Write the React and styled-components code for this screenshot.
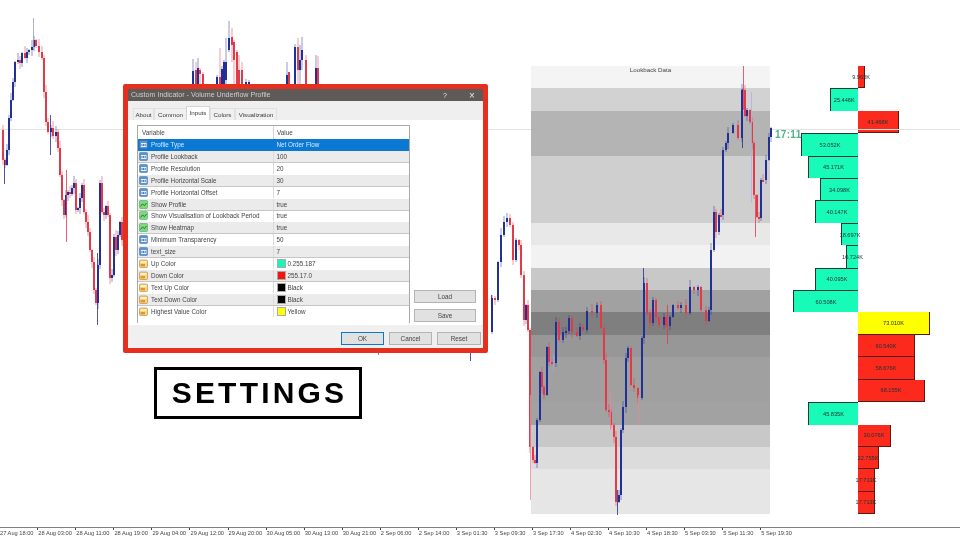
import React from 'react';
import styled, { createGlobalStyle } from 'styled-components';

const Global = createGlobalStyle`
  html, body { margin: 0; padding: 0; background: #fff; }
  body { font-family: "Liberation Sans", Arial, sans-serif; }
`;

const Page = styled.div`
  width: 960px; height: 540px; background: #fff; overflow: hidden;
  display: flex; flex-direction: column; filter: blur(0.3px);
`;
const ChartArea = styled.div`
  position: relative; height: 527px; flex: none; overflow: hidden;
`;
const GridLine = styled.div`
  position: absolute; left: 0; right: 0; top: 129px; height: 1px; background: #e2e2e2;
`;
const Heatmap = styled.div`
  position: absolute; left: 531px; top: 66px; width: 239px; height: 448px;
  display: flex; flex-direction: column;
`;
const Band = styled.div`
  flex: 1 1 0; background: ${p => p.$c};
`;
const HeatTitle = styled.div`
  position: absolute; left: 0; right: 0; top: 0; text-align: center;
  font-size: 6.2px; line-height: 7px; color: #444;
`;
const CandleSvg = styled.svg`
  position: absolute; left: 0; top: 0; width: 960px; height: 527px;
`;
const Countdown = styled.div`
  position: absolute; left: 775px; top: 128px; font-size: 10px; line-height: 13px;
  font-weight: 700; letter-spacing: .3px; color: #55b088;
`;
const Profile = styled.div`
  position: absolute; left: 780px; top: 66px; width: 170px; height: 448px;
  display: flex; flex-direction: column;
`;
const ProfileRow = styled.div`
  flex: 1 1 0; display: grid; grid-template-columns: 78px 1fr; min-height: 0;
`;
const Bar = styled.div`
  box-sizing: border-box; height: 100%; display: flex; align-items: center; justify-content: center;
  white-space: nowrap; font-size: 5.6px; color: #233; overflow: visible;
  background: ${p => p.$c};
  border: 0 solid #1b3a33;
  ${p => p.$left ? 'border-top-width: 1px; border-left-width: 1px;' : 'border-bottom-width: 1px; border-right-width: 1px; border-color: #5a1a14;'}
`;
const LeftSlot = styled.div`display: flex; justify-content: flex-end; min-width: 0;`;
const RightSlot = styled.div`display: flex; justify-content: flex-start; min-width: 0;`;

const Dialog = styled.div`
  position: absolute; left: 123px; top: 84px; width: 365px; height: 269px; box-sizing: border-box;
  border: 5px solid #e6301f; border-radius: 2px; background: #fff;
  display: flex; flex-direction: column; font-size: 6.3px; color: #3a3a3a;
`;
const TitleBar = styled.div`
  flex: none; height: 12px; background: #5e5a57; color: #cfcfcf; font-size: 7.1px;
  display: flex; align-items: center; padding-left: 3px; gap: 5px;
`;
const TitleText = styled.span`flex: 1;`;
const TitleBtn = styled.span`
  width: 22px; text-align: center; color: #e6e6e6; font-size: ${p => p.$s || 8}px;
`;
const TabStrip = styled.div`
  flex: none; height: 19px; background: #efefef; display: flex; align-items: flex-end;
  padding-left: 5px; box-sizing: border-box;
`;
const Tab = styled.div`
  box-sizing: border-box; height: ${p => p.$on ? 14 : 12}px; width: ${p => p.$w}px;
  display: flex; align-items: center; justify-content: center; font-size: 6.2px;
  padding-bottom: ${p => p.$on ? 3 : 0}px;
  background: ${p => p.$on ? '#fff' : '#f0f0f0'};
  border: 1px solid #dadada; border-bottom: none; margin-left: ${p => p.$on ? -1 : 0}px;
  border-color: ${p => p.$on ? '#d4d4d4' : '#e0e0e0'};
`;
const Body = styled.div`
  flex: 1; min-height: 0; background: #fff; display: flex; gap: 4px;
  padding: 5px 7px 2px 9px;
`;
const Table = styled.div`
  width: 273px; box-sizing: border-box; border: 1px solid #a9a9a9; border-bottom: none;
  display: flex; flex-direction: column; flex: none;
`;
const HeadRow = styled.div`
  flex: none; height: 13px; display: grid; grid-template-columns: 135px 1fr; align-items: center;
  font-size: 6.3px; color: #444;
`;
const HeadCell = styled.div`
  height: 100%; display: flex; align-items: center; padding-left: ${p => p.$pl}px;
  border-left: ${p => p.$sep ? '1px solid #d8d8d8' : 'none'};
`;
const Row = styled.div`
  flex: none; height: 11.93px; box-sizing: border-box; display: grid;
  grid-template-columns: 135px 1fr; align-items: center;
  background: ${p => p.$sel ? '#0b78d4' : p.$alt ? '#ebebeb' : '#fff'};
  color: ${p => p.$sel ? '#d8ebfb' : '#444'};
  border-bottom: 1px solid ${p => p.$sel ? '#0b78d4' : p.$alt ? '#c6c6c6' : '#fff'};
`;
const NameCell = styled.div`
  display: flex; align-items: center; gap: 3px; padding-left: 1px; white-space: nowrap; height: 100%;
`;
const ValueCell = styled.div`
  display: flex; align-items: center; gap: 2px; padding-left: 2.5px; height: 100%;
  white-space: nowrap; border-left: 1px solid ${p => p.$sel ? '#0b78d4' : '#dcdcdc'};
`;
const Swatch = styled.span`
  width: 7px; height: 7px; flex: none; background: ${p => p.$c}; border: .5px solid #aaa;
`;
const Side = styled.div`
  width: 62px; display: flex; flex-direction: column; justify-content: flex-end; gap: 6px;
  padding-bottom: 1px;
`;
const Btn = styled.div`
  box-sizing: border-box; height: 13px; width: ${p => p.$w ? p.$w + 'px' : '100%'};
  display: flex; align-items: center; justify-content: center; font-size: 6.4px; color: #444;
  background: #e1e1e1; border: ${p => p.$primary ? '1px solid #0a78d0' : '1px solid #b4b4b4'};
`;
const Footer = styled.div`
  flex: none; height: 23px; background: #f0f0f0; display: flex; justify-content: flex-end;
  align-items: flex-start; gap: 5px; padding: 7px 2px 0 0; box-sizing: border-box;
`;
const SettingsLabel = styled.div`
  position: absolute; left: 154px; top: 367px; width: 208px; height: 52px; box-sizing: border-box;
  border: 3px solid #000; background: #fff; display: flex; align-items: center; justify-content: center;
  font-size: 30px; font-weight: 700; letter-spacing: 3.2px; padding-left: 3px; color: #000;
`;
const TimeAxis = styled.div`
  flex: 1; display: flex; border-top: 1px solid #808080; font-size: 5.7px; color: #444;
  white-space: nowrap;
`;
const Tick = styled.div`
  flex: none; width: 38.06px; position: relative; padding: 1px 0 0 1px; box-sizing: border-box;
  line-height: 8px; overflow: visible;
  &::before {
    content: ''; position: absolute; left: 0; top: 0; width: 1px; height: ${p => p.$none ? 0 : 2}px; background: #444;
  }
`;
const FirstTick = styled(Tick)`width: 37.3px; padding-left: 0;`;

const IntIcon = () => (
  <svg width="9" height="9" viewBox="0 0 9 9">
    <rect x=".5" y=".5" width="8" height="8" rx="1" fill="#5b93d3" stroke="#3b6ea8" strokeWidth=".5" />
    <rect x="2" y="3" width="5.5" height="4" fill="#e8f1fb" />
    <path d="M3 4v2M4.6 4v2M6.2 4v2" stroke="#23508d" strokeWidth=".8" />
  </svg>
);
const BoolIcon = () => (
  <svg width="9" height="9" viewBox="0 0 9 9">
    <rect x=".5" y=".5" width="8" height="8" rx="1" fill="#7fd87f" stroke="#3e9e4a" strokeWidth=".5" />
    <path d="M1.5 6.5 3.5 4l2 1.6L7.5 3" fill="none" stroke="#146c2b" strokeWidth=".9" />
  </svg>
);
const ColorIcon = () => (
  <svg width="9" height="9" viewBox="0 0 9 9">
    <rect x=".5" y="1" width="8" height="7.5" rx="1" fill="#f6d585" stroke="#b9822a" strokeWidth=".6" />
    <rect x="1.5" y="2.2" width="6" height="1.6" fill="#fff7df" />
    <rect x="1.5" y="5" width="4.5" height="2.4" fill="#e6932e" />
  </svg>
);

const rows = [
  ['int', 'Profile Type', 'Net Order Flow'],
  ['int', 'Profile Lookback', '100'],
  ['int', 'Profile Resolution', '20'],
  ['int', 'Profile Horizontal Scale', '30'],
  ['int', 'Profile Horizontal Offset', '7'],
  ['bool', 'Show Profile', 'true'],
  ['bool', 'Show Visualisation of Lookback Period', 'true'],
  ['bool', 'Show Heatmap', 'true'],
  ['int', 'Minimum Transparency', '50'],
  ['int', 'text_size', '7'],
  ['color', 'Up Color', '0.255.187', '#19f5b8'],
  ['color', 'Down Color', '255.17.0', '#f5140a'],
  ['color', 'Text Up Color', 'Black', '#000'],
  ['color', 'Text Down Color', 'Black', '#000'],
  ['color', 'Highest Value Color', 'Yellow', '#ffff00'],
];
const icons = { int: IntIcon, bool: BoolIcon, color: ColorIcon };

const bands = ['#f4f4f4','#d2d2d2','#b4b4b4','#b4b4b4','#cfcfcf','#cfcfcf','#cfcfcf','#e8e8e8','#f2f2f2','#c8c8c8','#a1a1a1','#7f7f7f','#979797','#a0a0a0','#a0a0a0','#a2a2a2','#c8c8c8','#dcdcdc','#e6e6e6','#e6e6e6'];

const TEAL = '#18fbb8', RED = '#fb2a1c', YEL = '#ffff00';
const profile = [
  [7, RED, '9.963K'], [-28.5, TEAL, '25.446K'], [41, RED, '41.468K'], [-57, TEAL, '53.052K'],
  [-50, TEAL, '45.171K'], [-38, TEAL, '34.098K'], [-43, TEAL, '40.147K'], [-17, TEAL, '18.697K'],
  [-12, TEAL, '10.724K'], [-43, TEAL, '40.095K'], [-65, TEAL, '60.508K'], [72, YEL, '73.010K'],
  [57, RED, '60.540K'], [57, RED, '58.676K'], [67, RED, '68.155K'], [-50, TEAL, '45.835K'],
  [33, RED, '30.076K'], [21, RED, '22.755K'], [17, RED, '17.713K'], [17, RED, '17.713K'],
];

const ticks = ['28 Aug 03:00','28 Aug 11:00','28 Aug 19:00','29 Aug 04:00','29 Aug 12:00','29 Aug 20:00','30 Aug 05:00','30 Aug 13:00','30 Aug 21:00','2 Sep 06:00','2 Sep 14:00','3 Sep 01:30','3 Sep 09:30','3 Sep 17:30','4 Sep 02:30','4 Sep 10:30','4 Sep 18:30','5 Sep 03:30','5 Sep 11:30','5 Sep 19:30'];

const BLUE = '#1f3194', CRED = '#e23a48';
const leftSeries = [[0,130],[2,160],[4,165],[6,150],[8,118],[10,100],[12,82],[14,62],[17,60],[19,63],[21,53],[24,58],[26,52],[28,50],[31,47],[33,40],[35,46],[38,52],[41,58],[43,92],[45,122],[47,132],[50,128],[52,136],[55,132],[57,148],[59,175],[61,200],[63,215],[65,195],[67,192],[69,194],[71,188],[73,183],[75,210],[77,208],[79,198],[81,185],[83,212],[85,222],[87,232],[89,250],[91,262],[93,290],[95,303],[97,265],[99,183],[101,212],[103,215],[105,206],[107,215],[109,278],[111,275],[113,237],[115,250],[117,235],[119,222],[121,240],[124,226]];
const midSeries = [[488,332],[491,298],[494,300],[497,262],[500,235],[503,222],[506,218],[509,225],[512,260],[515,240],[518,245],[520,275],[523,320],[525,305],[527,330],[529,447],[532,460],[534,463],[536,420],[539,372],[541,387],[543,395],[546,347],[548,362],[551,363],[555,322],[558,340],[562,332],[565,331],[568,318],[571,332],[576,336],[579,327],[582,330],[586,311],[591,313],[596,305],[600,328],[603,360],[605,410],[608,412],[610,425],[613,437],[615,502],[618,495],[620,430],[622,407],[625,358],[627,348],[630,385],[633,388],[637,398],[641,338],[643,283],[646,313],[649,323],[652,300],[655,317],[658,325],[663,317],[665,326],[669,317],[672,305],[677,308],[680,305],[685,313],[689,287],[693,290],[697,287],[700,310],[705,321],[708,310],[710,250],[713,212],[715,232],[718,215],[720,215],[722,150],[725,143],[727,133],[732,125],[737,138],[741,90],[744,116],[746,110],[749,122],[751,143],[753,195],[756,217],[758,218],[760,180],[762,180],[765,160],[768,137],[770,128]];
const topCandles = [[192,71,85,59,85,BLUE],[195,70,85,62,85,CRED],[197,68,85,58,85,BLUE],[199,70,74,68,85,CRED],[202,74,85,72,85,CRED],[216,77,85,75,85,BLUE],[219,77,85,48,85,CRED],[221,69,85,66,85,BLUE],[223,62,85,60,85,BLUE],[225,62,80,38,85,BLUE],[228,38,50,21,52,BLUE],[231,37,45,28,62,CRED],[233,42,60,40,85,CRED],[236,52,85,50,85,CRED],[238,70,85,55,85,CRED],[241,70,85,62,85,CRED],[245,82,85,79,85,BLUE],[248,82,85,80,85,BLUE],[286,75,85,62,85,BLUE],[288,72,85,72,85,CRED],[294,47,85,44,85,BLUE],[297,47,70,38,85,CRED],[299,60,70,45,85,BLUE],[301,50,60,37,70,BLUE],[305,60,85,55,85,CRED],[315,68,85,55,85,BLUE],[317,68,85,56,85,CRED]];
const extraWicks = [[97,253,325,BLUE],[33,18,50,'#9aa0b0'],[4,160,184,BLUE],[66,170,242,CRED],[50,115,155,BLUE],[378,350,355,CRED],[470,350,361,BLUE],[491,295,332,BLUE],[743,66,110,CRED],[751,92,203,'#a9b3e0'],[755,195,237,CRED],[643,268,283,BLUE],[617,490,515,BLUE],[638,395,425,'#e98a93'],[610,392,430,'#e98a93'],[530,395,500,'#e98a93'],[553,355,372,'#9aa9dd'],[667,305,344,CRED],[714,232,244,BLUE],[742,89,148,BLUE]];

function candles(series) {
  return series.slice(1).map(([x, y], i) => {
    const prev = series[i][1];
    const up = y < prev;
    const top = Math.min(prev, y), bot = Math.max(prev, y);
    const wt = ((x * 37) % 7) + 1, wb = ((x * 53) % 6) + 1;
    const c = up ? BLUE : CRED;
    return (
      <g key={x}>
        <rect x={x + .5} y={top - wt} width="1" height={bot - top + wt + wb} fill={c} opacity=".5" />
        <rect x={x} y={top} width="2" height={Math.max(bot - top, 2)} fill={c} />
      </g>
    );
  });
}

export default function App() {
  return (
    <Page>
      <Global />
      <ChartArea>
        <Profile>
          {profile.map(([w, c, t], i) => (
            <ProfileRow key={i}>
              <LeftSlot>{w < 0 && <Bar $left $c={c} style={{ width: -w }}>{t}</Bar>}</LeftSlot>
              <RightSlot>{w > 0 && <Bar $c={c} style={{ width: w }}>{t}</Bar>}</RightSlot>
            </ProfileRow>
          ))}
        </Profile>
        <GridLine />
        <Heatmap>
          {bands.map((c, i) => <Band key={i} $c={c} />)}
          <HeatTitle>Lookback Data</HeatTitle>
        </Heatmap>
        <CandleSvg viewBox="0 0 960 527">
          {candles(leftSeries)}
          {candles(midSeries)}
          {topCandles.map(([x, t, b, wt, wb, c]) => (
            <g key={x}>
              <rect x={x + .5} y={wt} width="1" height={wb - wt} fill={c} opacity=".5" />
              <rect x={x} y={t} width="2" height={b - t} fill={c} />
            </g>
          ))}
          {extraWicks.map(([x, a, b, c], i) => <rect key={i} x={x} y={a} width="1" height={b - a} fill={c} opacity=".8" />)}
        </CandleSvg>
        <Countdown>17:11</Countdown>
        <Dialog>
          <TitleBar>
            <TitleText>Custom Indicator - Volume Underflow Profile</TitleText>
            <TitleBtn $s={7}>?</TitleBtn>
            <TitleBtn $s={10}>×</TitleBtn>
          </TitleBar>
          <TabStrip>
            <Tab $w={21}>About</Tab>
            <Tab $w={33}>Common</Tab>
            <Tab $w={24} $on>Inputs</Tab>
            <Tab $w={25}>Colors</Tab>
            <Tab $w={42}>Visualization</Tab>
          </TabStrip>
          <Body>
            <Table>
              <HeadRow>
                <HeadCell $pl={4}>Variable</HeadCell>
                <HeadCell $pl={3} $sep>Value</HeadCell>
              </HeadRow>
              {rows.map(([k, name, val, sw], i) => {
                const I = icons[k];
                return (
                  <Row key={name} $sel={i === 0} $alt={i % 2 === 1}>
                    <NameCell><I />{name}</NameCell>
                    <ValueCell $sel={i === 0}>{sw && <Swatch $c={sw} />}{val}</ValueCell>
                  </Row>
                );
              })}
            </Table>
            <Side>
              <Btn>Load</Btn>
              <Btn>Save</Btn>
            </Side>
          </Body>
          <Footer>
            <Btn $w={43} $primary>OK</Btn>
            <Btn $w={43}>Cancel</Btn>
            <Btn $w={44}>Reset</Btn>
          </Footer>
        </Dialog>
        <SettingsLabel>SETTINGS</SettingsLabel>
      </ChartArea>
      <TimeAxis>
        <FirstTick $none>27 Aug 18:00</FirstTick>
        {ticks.map(t => <Tick key={t}>{t}</Tick>)}
      </TimeAxis>
    </Page>
  );
}
